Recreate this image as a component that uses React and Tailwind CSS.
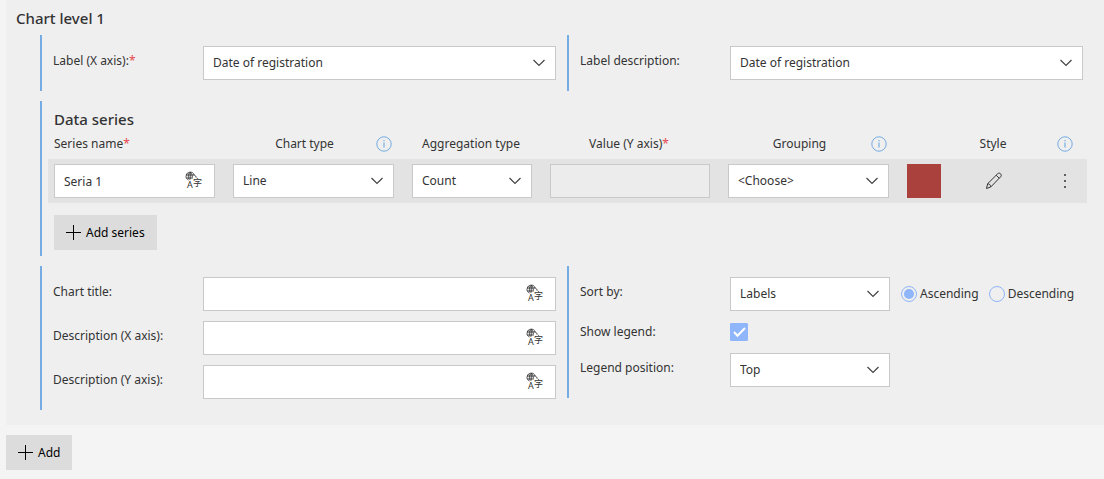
import React from 'react';

const COLUMNS = [
    { label: 'Series name', width: 176, required: true, align: 'left' },
    { label: 'Chart type', width: 179, info: true },
    { label: 'Aggregation type', width: 138 },
    { label: 'Value (Y axis)', width: 178, required: true },
    { label: 'Grouping', width: 179, info: true },
    { label: '', width: 52 },
    { label: 'Style', width: 88 },
    { label: '', width: 49, info: true },
];

export default function App() {
    return (
        <div className="min-h-screen bg-[#f4f4f4] pl-1.5 font-['Noto_Sans','Open_Sans',sans-serif] text-xs text-[#333]">
            <section className="bg-[#efefef] pt-2 pb-[15px] pr-2.5">
                <h2 className="pl-2.5 mb-[7px] text-[15px] leading-5 font-medium">Chart level 1</h2>

                <div className="pl-[34px] space-y-2.5">
                    <div className="grid grid-cols-2">
                        <Group>
                            <Field id="label-x" label="Label (X axis):" required>
                                <Select id="label-x" value="Date of registration" />
                            </Field>
                        </Group>
                        <Group>
                            <Field id="label-desc" label="Label description:">
                                <Select id="label-desc" value="Date of registration" />
                            </Field>
                        </Group>
                    </div>

                    <div className="border-l-2 border-[#74ace3] pl-1.5 pr-[7px] pt-2 pb-1.5">
                        <h3 className="pl-1.5 text-[15px] leading-5 font-medium">Data series</h3>
                        <SeriesTable />
                        <div className="pl-1.5 pt-3">
                            <AddButton>Add series</AddButton>
                        </div>
                    </div>

                    <div className="grid grid-cols-2 items-start">
                        <Group>
                            <Field id="chart-title" label="Chart title:">
                                <TranslatableInput id="chart-title" />
                            </Field>
                            <Field id="desc-x" label="Description (X axis):">
                                <TranslatableInput id="desc-x" />
                            </Field>
                            <Field id="desc-y" label="Description (Y axis):">
                                <TranslatableInput id="desc-y" />
                            </Field>
                        </Group>
                        <Group>
                            <Field id="sort-by" label="Sort by:">
                                <div className="flex items-center">
                                    <div className="w-40 mr-[11px] shrink-0">
                                        <Select id="sort-by" value="Labels" />
                                    </div>
                                    <Radio label="Ascending" defaultChecked />
                                    <Radio label="Descending" />
                                </div>
                            </Field>
                            <div className="flex items-center h-[22px]">
                                <label htmlFor="show-legend" className="w-[150px] shrink-0">Show legend:</label>
                                <span className="relative flex">
                                    <input id="show-legend" type="checkbox" defaultChecked className="peer appearance-none size-[18px] rounded-[1px] border border-[#8fb5fa] checked:bg-[#8fb5fa]" />
                                    <svg viewBox="0 0 18 18" className="absolute inset-0 size-[18px] pointer-events-none hidden peer-checked:block" fill="none" stroke="#fff" strokeWidth="2">
                                        <path d="M4 9l3.5 3.8L15 5" />
                                    </svg>
                                </span>
                            </div>
                            <Field id="legend-position" label="Legend position:">
                                <div className="w-40">
                                    <Select id="legend-position" value="Top" />
                                </div>
                            </Field>
                        </Group>
                    </div>
                </div>
            </section>

            <div className="py-2.5">
                <AddButton>Add</AddButton>
            </div>
        </div>
    );
}

function SeriesTable() {
    return (
        <table className="w-full table-fixed">
            <colgroup>
                {COLUMNS.map((col, i) => (
                    <col key={i} style={{ width: col.width }} />
                ))}
            </colgroup>
            <thead>
                <tr className="h-[30px]">
                    {COLUMNS.map((col, i) => (
                        <th key={i} className="px-[9px] first:pl-1.5 last:pr-3 font-normal whitespace-nowrap">
                            <div className="flex items-center pr-0.5">
                                {col.label && (
                                    <span className={col.align === 'left' ? '' : 'flex-1 text-center'}>
                                        {col.label}
                                        {col.required && <Required />}
                                    </span>
                                )}
                                {col.info && <InfoButton />}
                            </div>
                        </th>
                    ))}
                </tr>
            </thead>
            <tbody>
                <tr className="h-11 bg-[#e3e3e3]">
                    <td className="pl-1.5 pr-[9px]">
                        <TranslatableInput label="Series name" value="Seria 1" />
                    </td>
                    <td className="px-[9px]"><Select label="Chart type" value="Line" /></td>
                    <td className="px-[9px]"><Select label="Aggregation type" value="Count" /></td>
                    <td className="px-[9px]">
                        <input type="text" disabled aria-label="Value (Y axis)" className="block w-full h-[34px] border border-[#c9c9c9] bg-[#ececec]" />
                    </td>
                    <td className="px-[9px]"><Select label="Grouping" value="<Choose>" /></td>
                    <td className="px-[9px]">
                        <button type="button" aria-label="Series color" className="block w-full h-[34px] bg-[#ab413d]"></button>
                    </td>
                    <td>
                        <button type="button" aria-label="Edit style" className="block mx-auto">
                            <PencilIcon />
                        </button>
                    </td>
                    <td>
                        <button type="button" aria-label="More options" className="block mx-auto pl-1">
                            <svg width="16" height="16" viewBox="0 0 16 16" fill="#333">
                                <circle cx="8" cy="2" r="1" />
                                <circle cx="8" cy="8" r="1" />
                                <circle cx="8" cy="14" r="1" />
                            </svg>
                        </button>
                    </td>
                </tr>
            </tbody>
        </table>
    );
}

function Group({ children }) {
    return <div className="border-l-2 border-[#74ace3] py-[11px] pl-[11px] pr-[11px] space-y-2.5">{children}</div>;
}

function Field({ id, label, required, children }) {
    return (
        <div className="flex items-start">
            <label htmlFor={id} className="w-[150px] shrink-0 pt-[5px] leading-5">
                {label}
                {required && <Required />}
            </label>
            <div className="flex-1 min-w-0">{children}</div>
        </div>
    );
}

function Required() {
    return <span className="text-[#e5484d]">*</span>;
}

function Select({ id, label, value }) {
    return (
        <div className="relative">
            <select id={id} aria-label={label} defaultValue={value} className="block appearance-none w-full h-[34px] pl-[9px] pr-8 bg-white border border-[#c9c9c9]">
                <option>{value}</option>
            </select>
            <svg width="12" height="8" viewBox="0 0 12 8" className="absolute right-[11px] top-[13px] pointer-events-none" fill="none" stroke="#444" strokeWidth="1.2">
                <path d="M.5 1L6 6.5 11.5 1" />
            </svg>
        </div>
    );
}

function TranslatableInput({ id, label, value = '' }) {
    return (
        <div className="relative">
            <input id={id} aria-label={label} type="text" defaultValue={value} className="block w-full h-[34px] pl-[9px] pr-9 bg-white border border-[#c9c9c9]" />
            <button type="button" aria-label="Translate" className="absolute right-3 top-[7px]">
                <TranslateIcon />
            </button>
        </div>
    );
}

function Radio({ label, defaultChecked }) {
    return (
        <label className="flex items-center gap-[3px] mr-2.5 whitespace-nowrap">
            <input type="radio" name="sort-direction" defaultChecked={defaultChecked} className="appearance-none size-4 shrink-0 rounded-full border border-[#8fb5fa] p-0.5 bg-clip-content checked:bg-[#8fb5fa]" />
            {label}
        </label>
    );
}

function AddButton({ children }) {
    return (
        <button type="button" className="flex items-center gap-1 h-[35px] px-3 bg-[#dcdcdc] text-black">
            <svg width="16" height="16" viewBox="0 0 16 16" fill="none" stroke="currentColor">
                <path d="M7.5 0v15M0 7.5h15" />
            </svg>
            {children}
        </button>
    );
}

function InfoButton() {
    return (
        <button type="button" aria-label="Info" className="block ml-auto shrink-0">
            <svg width="16" height="16" viewBox="0 0 16 16" fill="none" stroke="#74ace3">
                <circle cx="8" cy="8" r="7.2" />
                <path d="M8 6.5v5M8 4v1.2" strokeWidth="1.2" />
            </svg>
        </button>
    );
}

function PencilIcon() {
    return (
        <svg width="18" height="18" viewBox="0 0 18 18" fill="none" stroke="#333" strokeLinejoin="round">
            <path d="M1.5 16.5l1.2-4.8L12.6 1.8c.9-.9 2.2-.9 3 0s.9 2.1 0 3L5.8 14.9z" />
            <path d="M11.2 3.2l3 3M2.7 11.7c1.7.2 2.9 1.3 3.1 3.2" />
        </svg>
    );
}

function TranslateIcon() {
    return (
        <svg width="18" height="20" viewBox="0 0 18 20" fill="none" stroke="#333">
            <path d="M3.5 9C1.8 8.2 1 6.800 1 5.500a4.200 4.200 0 0 1 8.200-1.400c1.300.3 1.900 1.300 1.900 2.600M5.200 1.300v7.200M1.300 4h7.900M1.300 7h6.500M5.200 1.300c-2.300 2-2.300 5-.9 7.200M5.200 1.300c1.700 1.200 2.100 2.700 2.100 5.200" strokeWidth=".9" />
            <text x="2" y="17" fontSize="9" fontFamily="Noto Sans, sans-serif" fill="#333" stroke="none">A</text>
            <text x="8" y="15" fontSize="9" fontFamily="Noto Sans CJK SC, sans-serif" fill="#333" stroke="none">字</text>
        </svg>
    );
}
